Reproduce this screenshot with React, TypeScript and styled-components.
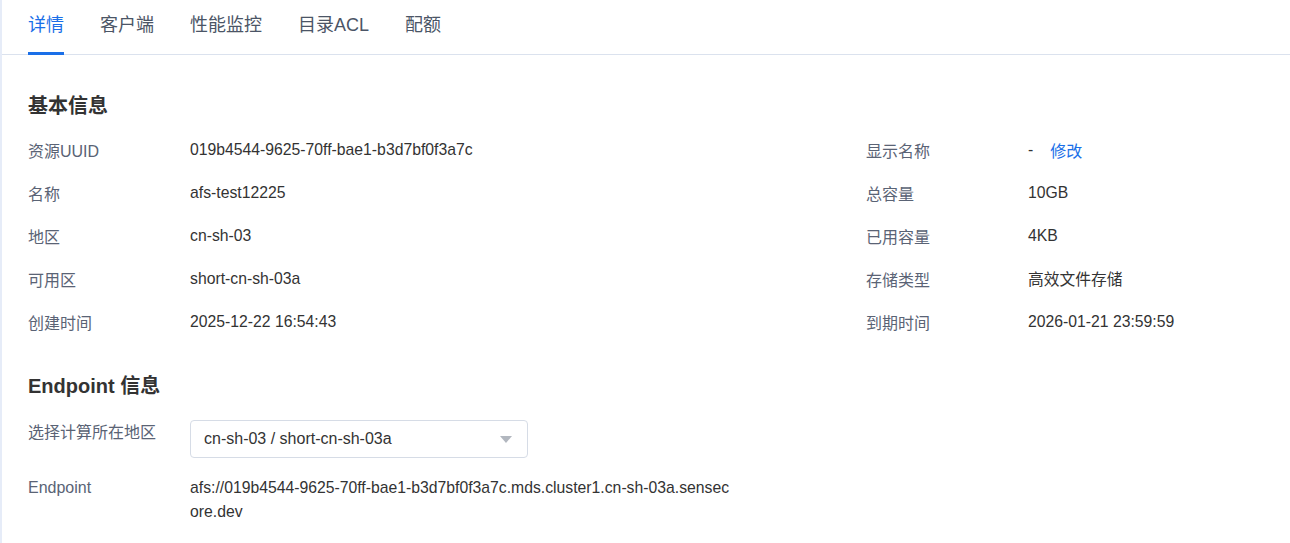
import React from "react";
import styled, { createGlobalStyle } from "styled-components";

const Global = createGlobalStyle`
  html, body { margin: 0; padding: 0; background: #fff; }
  body { font-family: "Liberation Sans", Arial, "Noto Sans CJK SC", sans-serif; }
  * { box-sizing: border-box; }
`;

const Page = styled.div`
  width: 1290px;
  height: 543px;
  border-left: 2px solid #e6ecf8;
  background: #fff;
  overflow: hidden;
`;

const TabBar = styled.div`
  display: flex;
  gap: 36px;
  height: 55px;
  padding-left: 26px;
  border-bottom: 1px solid #dbe2ee;
`;

const Tab = styled.div<{ $active?: boolean }>`
  position: relative;
  display: flex;
  align-items: center;
  height: 54px;
  padding-bottom: 8px;
  font-size: 18px;
  color: ${(p) => (p.$active ? "#1a6fe8" : "#4b5566")};
  &::after {
    content: "";
    display: ${(p) => (p.$active ? "block" : "none")};
    position: absolute;
    left: 0;
    right: 0;
    bottom: -1px;
    height: 3px;
    background: #1a6fe8;
  }
`;

const Content = styled.div`
  padding: 37px 26px 0;
`;

const SectionTitle = styled.div<{ $mt?: number }>`
  font-size: 20px;
  line-height: 28px;
  font-weight: bold;
  color: #333;
  margin-top: ${(p) => p.$mt ?? 0}px;
`;

const InfoGrid = styled.div`
  display: grid;
  grid-template-columns: 838px 1fr;
  margin-top: 8px;
`;

const InfoItem = styled.div`
  display: grid;
  grid-template-columns: 162px 1fr;
  height: 43px;
  align-items: center;
  font-size: 16px;
`;

const Label = styled.div`
  color: #5a6375;
`;

const Value = styled.div`
  color: #333;
  font-size: 15.75px;
  display: flex;
  align-items: center;
  gap: 17px;
`;

const Link = styled.a`
  color: #1a6fe8;
  font-size: 16px;
  text-decoration: none;
  cursor: pointer;
`;

const FormRow = styled.div<{ $mt: number }>`
  display: grid;
  grid-template-columns: 162px 1fr;
  align-items: start;
  margin-top: ${(p) => p.$mt}px;
  font-size: 16px;
  line-height: 24px;
`;

const SelectBox = styled.div`
  width: 338px;
  height: 38px;
  border: 1px solid #d6dce6;
  border-radius: 4px;
  display: flex;
  align-items: center;
  justify-content: space-between;
  padding: 0 15px 0 13px;
  margin-top: -1px;
  font-size: 16px;
  color: #333;
`;

const Caret = styled.span`
  width: 0;
  height: 0;
  border-left: 6px solid transparent;
  border-right: 6px solid transparent;
  border-top: 7px solid #b2b7bf;
`;

const EndpointValue = styled.div`
  color: #333;
  font-size: 15.75px;
  width: 541px;
  word-break: break-all;
`;

const basic: [string, React.ReactNode, string, React.ReactNode][] = [
  ["资源UUID", "019b4544-9625-70ff-bae1-b3d7bf0f3a7c", "显示名称", null],
  ["名称", "afs-test12225", "总容量", "10GB"],
  ["地区", "cn-sh-03", "已用容量", "4KB"],
  ["可用区", "short-cn-sh-03a", "存储类型", "高效文件存储"],
  ["创建时间", "2025-12-22 16:54:43", "到期时间", "2026-01-21 23:59:59"],
];

export default function App() {
  const tabs = ["详情", "客户端", "性能监控", "目录ACL", "配额"];
  return (
    <Page>
      <Global />
      <TabBar>
        {tabs.map((t, i) => (
          <Tab key={t} $active={i === 0}>
            {t}
          </Tab>
        ))}
      </TabBar>
      <Content>
        <SectionTitle>基本信息</SectionTitle>
        <InfoGrid>
          {basic.map(([l1, v1, l2, v2]) => (
            <React.Fragment key={l1}>
              <InfoItem>
                <Label>{l1}</Label>
                <Value>{v1}</Value>
              </InfoItem>
              <InfoItem>
                <Label>{l2}</Label>
                <Value>
                  {v2 === null ? (
                    <>
                      <span>-</span>
                      <Link>修改</Link>
                    </>
                  ) : (
                    v2
                  )}
                </Value>
              </InfoItem>
            </React.Fragment>
          ))}
        </InfoGrid>
        <SectionTitle $mt={29}>Endpoint 信息</SectionTitle>
        <FormRow $mt={21}>
          <Label>选择计算所在地区</Label>
          <SelectBox>
            <span>cn-sh-03 / short-cn-sh-03a</span>
            <Caret />
          </SelectBox>
        </FormRow>
        <FormRow $mt={18}>
          <Label>Endpoint</Label>
          <EndpointValue>
            afs://019b4544-9625-70ff-bae1-b3d7bf0f3a7c.mds.cluster1.cn-sh-03a.sensecore.dev
          </EndpointValue>
        </FormRow>
      </Content>
    </Page>
  );
}
